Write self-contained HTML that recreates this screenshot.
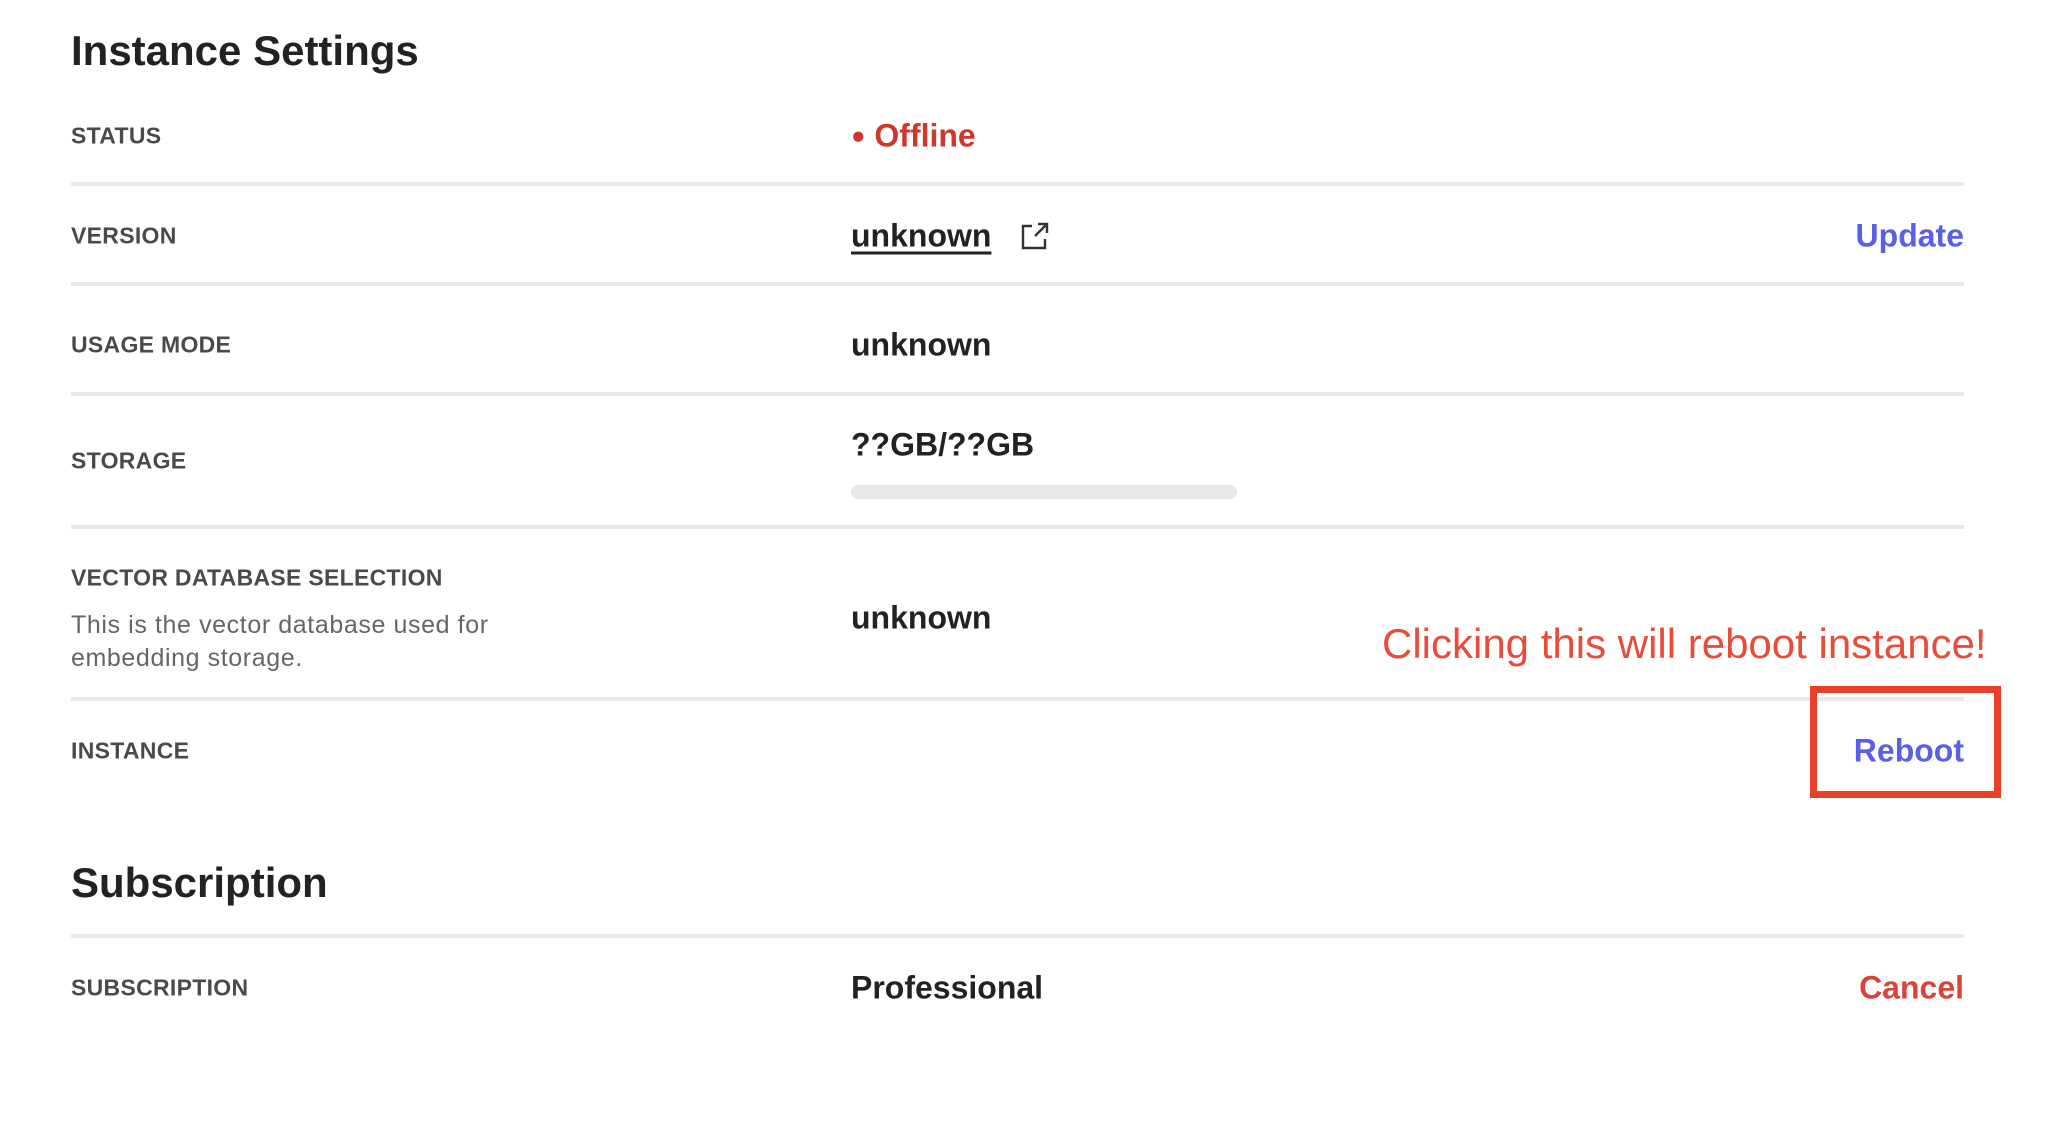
<!DOCTYPE html>
<html><head><meta charset="utf-8"><style>
body{margin:0;width:2054px;height:1124px;background:#fff;font-family:"Liberation Sans",sans-serif;position:relative;overflow:hidden;color:#222}
.a{position:absolute;white-space:nowrap}
.h{font-size:42px;font-weight:bold;color:#222;transform:translateY(-50%)}
.l{font-size:23px;font-weight:bold;color:#4a4a4a;transform:translateY(-50%);letter-spacing:0.3px}
.v{font-size:32px;font-weight:bold;color:#222;transform:translateY(-50%)}
.line{position:absolute;left:71px;width:1893px;height:4px;background:#e8e8e8}
.r{right:90px}
</style></head><body>
<div class="a h" style="left:71px;top:51px">Instance Settings</div>

<div class="a l" style="left:71px;top:136px">STATUS</div>
<div class="a v" style="left:851px;top:136px;color:#d0362b"><span style="font-size:24px;vertical-align:3px">●</span> Offline</div>
<div class="line" style="top:182px"></div>

<div class="a l" style="left:71px;top:236px">VERSION</div>
<div class="a v" style="left:851px;top:236px;text-decoration:underline;text-underline-offset:5px">unknown</div>
<svg class="a" style="left:1020px;top:221px" width="30" height="30" viewBox="0 0 30 30" fill="none" stroke="#333" stroke-width="2.4"><path d="M12 5H3v22h22v-9"/><path d="M15 15L27 3M18 3h9v9"/></svg>
<div class="a v r" style="top:236px;color:#5a5fe8">Update</div>
<div class="line" style="top:282px"></div>

<div class="a l" style="left:71px;top:345px">USAGE MODE</div>
<div class="a v" style="left:851px;top:345px">unknown</div>
<div class="line" style="top:392px"></div>

<div class="a l" style="left:71px;top:461px">STORAGE</div>
<div class="a v" style="left:851px;top:445px">??GB/??GB</div>
<div class="a" style="left:851px;top:485px;width:386px;height:14px;border-radius:7px;background:#e8e8e8"></div>
<div class="line" style="top:525px"></div>

<div class="a l" style="left:71px;top:578px">VECTOR DATABASE SELECTION</div>
<div class="a" style="left:71px;top:609px;font-size:25px;color:#666;line-height:33px;letter-spacing:0.6px">This is the vector database used for<br>embedding storage.</div>
<div class="a v" style="left:851px;top:618px">unknown</div>
<div class="a" style="left:1382px;top:620px;font-size:42px;color:#e84c3d">Clicking this will reboot instance!</div>
<div class="line" style="top:697px"></div>

<div class="a l" style="left:71px;top:751px">INSTANCE</div>
<div class="a" style="left:1810px;top:686px;width:177px;height:98px;border:7px solid #e8412a"></div>
<div class="a v r" style="top:751px;color:#5a5fe8">Reboot</div>

<div class="a h" style="left:71px;top:883px">Subscription</div>
<div class="line" style="top:934px"></div>
<div class="a l" style="left:71px;top:988px">SUBSCRIPTION</div>
<div class="a v" style="left:851px;top:988px">Professional</div>
<div class="a v r" style="top:988px;color:#d9433a">Cancel</div>
</body></html>
